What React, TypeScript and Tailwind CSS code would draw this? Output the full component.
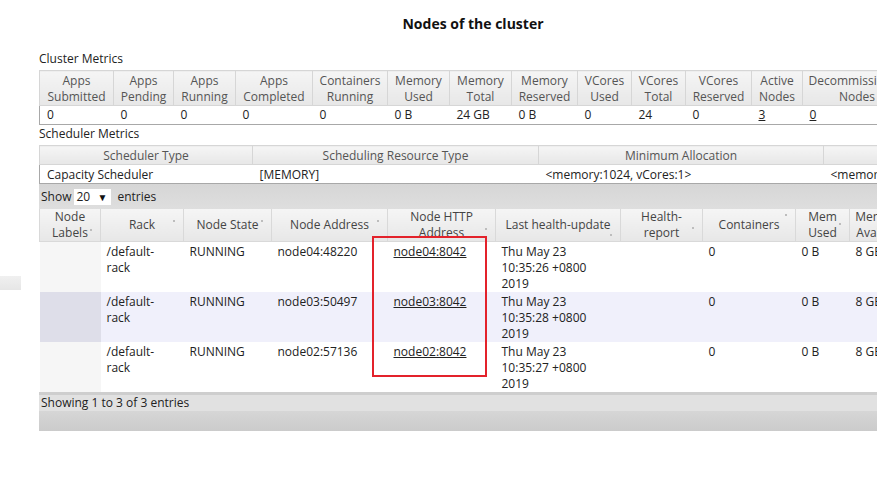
import React from "react";

type MetricCol = { w: number; head: string[]; value: string; link?: boolean };

const metricCols: MetricCol[] = [
    { w: 74, head: ["Apps", "Submitted"], value: "0" },
    { w: 60, head: ["Apps", "Pending"], value: "0" },
    { w: 62, head: ["Apps", "Running"], value: "0" },
    { w: 77, head: ["Apps", "Completed"], value: "0" },
    { w: 75, head: ["Containers", "Running"], value: "0" },
    { w: 62, head: ["Memory", "Used"], value: "0 B" },
    { w: 62, head: ["Memory", "Total"], value: "24 GB" },
    { w: 66, head: ["Memory", "Reserved"], value: "0 B" },
    { w: 54, head: ["VCores", "Used"], value: "0" },
    { w: 54, head: ["VCores", "Total"], value: "24" },
    { w: 66, head: ["VCores", "Reserved"], value: "0" },
    { w: 51, head: ["Active", "Nodes"], value: "3", link: true },
    { w: 109, head: ["Decommissioned", "Nodes"], value: "0", link: true },
];

const schedCols = [
    { w: 213, head: "Scheduler Type", value: "Capacity Scheduler" },
    { w: 286, head: "Scheduling Resource Type", value: "[MEMORY]" },
    { w: 285, head: "Minimum Allocation", value: "<memory:1024, vCores:1>" },
    { w: 300, head: "Maximum Allocation", value: "<memory:8192, vCores:4>" },
];

// dot = top offset of the little sort marker in the header cell
const nodeCols = [
    { w: 61, head: ["Node", "Labels"], dot: 20 },
    { w: 83, head: ["Rack"], dot: 11 },
    { w: 88, head: ["Node State"], dot: 11 },
    { w: 116, head: ["Node Address"], dot: 11 },
    { w: 108, head: ["Node HTTP", "Address"], dot: 19 },
    { w: 125, head: ["Last health-update"], dot: 25 },
    { w: 82, head: ["Health-", "report"], dot: 18 },
    { w: 93, head: ["Containers"], dot: 5 },
    { w: 54, head: ["Mem", "Used"], dot: 14 },
    { w: 40, head: ["Mem", "Avail"], dot: 14 },
];

const nodes = [
    { addr: "node04:48220", http: "node04:8042", time: "10:35:26 +0800" },
    { addr: "node03:50497", http: "node03:8042", time: "10:35:28 +0800" },
    { addr: "node02:57136", http: "node02:8042", time: "10:35:27 +0800" },
];

const headBg = "bg-gradient-to-b from-[#f5f5f5] to-[#e7e7e7]";
const cell = "align-top pt-[2px] px-[6px] leading-[16px]";

const App: React.FC = () => {
    return (
        <div className="relative w-[877px] h-[496px] overflow-hidden bg-white font-['Open_Sans',sans-serif] text-[12px] text-[#222]">
            {/* stray bar on the left edge */}
            <div className="absolute left-0 top-[276px] w-[21px] h-[14px] bg-gradient-to-b from-[#f0f0f0] to-[#e6e6e6]" />

            <h1 className="w-[946px] pt-[15px] h-[32px] text-center text-[14px] leading-[18px] font-bold text-[#111]">
                Nodes of the cluster
            </h1>

            <div className="ml-[39px] w-[1100px]">
                <div className="mt-[18px] h-[20px] leading-[18px] text-[#222]">Cluster Metrics</div>
                <table className="table-fixed border-collapse">
                    <colgroup>
                        {metricCols.map((c, i) => (
                            <col key={i} style={{ width: c.w }} />
                        ))}
                    </colgroup>
                    <thead>
                        <tr className="h-[35px]">
                            {metricCols.map((c, i) => (
                                <th
                                    key={i}
                                    className={`${headBg} align-top border border-[#d6d6d6] px-[2px] pt-[2px] font-normal text-[#555] leading-[16px] text-center whitespace-nowrap`}
                                >
                                    {c.head[0]}
                                    <br />
                                    {c.head[1]}
                                </th>
                            ))}
                        </tr>
                    </thead>
                    <tbody>
                        <tr className="h-[19px] border-b border-l border-[#a8a8a8]">
                            {metricCols.map((c, i) => (
                                <td key={i} className="px-[7px] leading-[16px] whitespace-nowrap">
                                    {c.link ? <span className="underline">{c.value}</span> : c.value}
                                </td>
                            ))}
                        </tr>
                    </tbody>
                </table>

                <div className="h-[20px] leading-[18px]">Scheduler Metrics</div>
                <table className="table-fixed border-collapse">
                    <colgroup>
                        {schedCols.map((c, i) => (
                            <col key={i} style={{ width: c.w }} />
                        ))}
                    </colgroup>
                    <thead>
                        <tr className="h-[19px]">
                            {schedCols.map((c, i) => (
                                <th
                                    key={i}
                                    className={`${headBg} border border-[#d6d6d6] pt-[1px] font-normal text-[#555] leading-[16px] text-center whitespace-nowrap`}
                                >
                                    {c.head}
                                </th>
                            ))}
                        </tr>
                    </thead>
                    <tbody>
                        <tr className="h-[19px] border-b border-l border-[#a8a8a8]">
                            {schedCols.map((c, i) => (
                                <td key={i} className="px-[7px] pt-[1px] leading-[16px] whitespace-nowrap">
                                    {c.value}
                                </td>
                            ))}
                        </tr>
                    </tbody>
                </table>

                <div className="h-[25px] flex items-center pl-[2px] bg-gradient-to-b from-[#d6d6d6] to-[#dedede] text-[#222]">
                    <span>Show</span>
                    <span className="ml-[3px] w-[37px] h-[16px] bg-white flex items-center justify-between pl-[2px] pr-[4px] leading-[16px]">
                        <span>20</span>
                        <span className="text-[10px] text-[#111]">▼</span>
                    </span>
                    <span className="ml-[6px]">entries</span>
                </div>

                <table className="table-fixed border-collapse">
                    <colgroup>
                        {nodeCols.map((c, i) => (
                            <col key={i} style={{ width: c.w }} />
                        ))}
                    </colgroup>
                    <thead>
                        <tr className="h-[32px]">
                            {nodeCols.map((c, i) => (
                                <th
                                    key={i}
                                    className={`${headBg} relative border-x border-b border-[#d9d9d9] px-[2px] font-normal text-[#444] leading-[16px] text-center whitespace-nowrap`}
                                >
                                    {c.head.map((l, j) => (
                                        <div key={j}>{l}</div>
                                    ))}
                                    <span
                                        className="absolute right-[8px] w-[2px] h-[2px] bg-[#bdbdbd]"
                                        style={{ top: c.dot }}
                                    />
                                </th>
                            ))}
                        </tr>
                    </thead>
                    <tbody>
                        {nodes.map((n, i) => {
                            const even = i % 2 === 1;
                            return (
                                <tr key={n.addr} className={`h-[50px] ${even ? "bg-[#f0f0fb]" : "bg-white"}`}>
                                    <td className={even ? "bg-[#dedee9]" : "bg-[#f6f6f6]"} />
                                    <td className={cell}>
                                        /default-
                                        <br />
                                        rack
                                    </td>
                                    <td className={cell}>RUNNING</td>
                                    <td className={cell}>{n.addr}</td>
                                    <td className={cell}>
                                        <span className="underline">{n.http}</span>
                                    </td>
                                    <td className={`${cell} whitespace-nowrap`}>
                                        Thu May 23
                                        <br />
                                        {n.time}
                                        <br />
                                        2019
                                    </td>
                                    <td />
                                    <td className={cell}>0</td>
                                    <td className={cell}>0 B</td>
                                    <td className={`${cell} whitespace-nowrap`}>8 GB</td>
                                </tr>
                            );
                        })}
                    </tbody>
                </table>

                <div className="border-t-[3px] border-[#cecece]">
                    <div className="h-[16px] bg-[#e1e1e1] pl-[2px] leading-[16px]">Showing 1 to 3 of 3 entries</div>
                    <div className="h-[20px] bg-gradient-to-b from-[#d6d6d6] to-[#cbcbcb]" />
                </div>
            </div>

            {/* red highlight box drawn over the HTTP address column */}
            <div className="absolute left-[372px] top-[236px] w-[115px] h-[141px] border-2 border-[#e3222b]" />
        </div>
    );
};

export default App;
